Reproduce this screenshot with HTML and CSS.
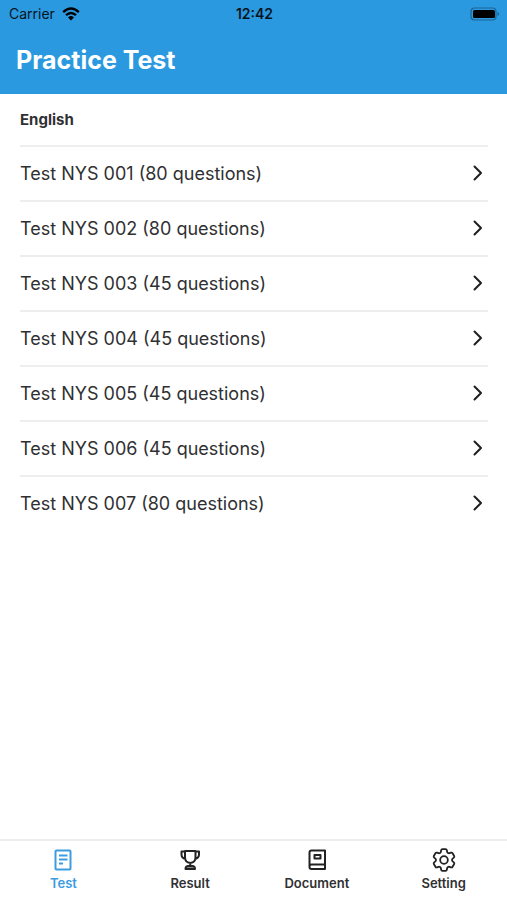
FILE: index.html
```html
<!DOCTYPE html>
<html lang="en">
<head>
<meta charset="utf-8">
<meta name="viewport" content="width=device-width, initial-scale=1">
<title>Practice Test</title>
<link rel="stylesheet" href="styles.css">
</head>
<body>
<header class="header">
  <div class="status">
    <div class="carrier">
      <span>Carrier</span>
      <svg class="wifi" viewBox="0 0 18 14" aria-hidden="true">
        <path d="M1.2 5.2Q9-2 16.8 5.2M4 8.2Q9 3.8 14 8.2" fill="none" stroke="currentColor" stroke-width="2.4"/>
        <path d="M6 10.4Q9 7.8 12 10.4L9 13.6Z" fill="currentColor"/>
      </svg>
    </div>
    <time class="clock">12:42</time>
    <svg class="battery" viewBox="0 0 30 14" aria-hidden="true">
      <rect x="1" y="1" width="25" height="12" rx="3.5" fill="none" stroke="#1c6593" stroke-width="1.2"/>
      <rect x="3" y="3" width="22" height="8" rx="1.6" fill="#000"/>
      <path d="M27.5 5v4q1.6-.6 1.6-2t-1.6-2Z" fill="#1c6593"/>
    </svg>
  </div>
  <h1 class="title">Practice Test</h1>
</header>
<main class="content">
  <h2 class="section">English</h2>
  <ul class="list">
    <li><a class="row" href="#1"><span>Test NYS 001 (80 questions)</span><svg class="chevron" viewBox="0 0 10 16" aria-hidden="true"><path d="M1.5 1.5 8 8l-6.500 6.500"/></svg></a></li>
    <li><a class="row" href="#2"><span>Test NYS 002 (80 questions)</span><svg class="chevron" viewBox="0 0 10 16" aria-hidden="true"><path d="M1.5 1.5 8 8l-6.500 6.500"/></svg></a></li>
    <li><a class="row" href="#3"><span>Test NYS 003 (45 questions)</span><svg class="chevron" viewBox="0 0 10 16" aria-hidden="true"><path d="M1.5 1.5 8 8l-6.500 6.500"/></svg></a></li>
    <li><a class="row" href="#4"><span>Test NYS 004 (45 questions)</span><svg class="chevron" viewBox="0 0 10 16" aria-hidden="true"><path d="M1.5 1.5 8 8l-6.500 6.500"/></svg></a></li>
    <li><a class="row" href="#5"><span>Test NYS 005 (45 questions)</span><svg class="chevron" viewBox="0 0 10 16" aria-hidden="true"><path d="M1.5 1.5 8 8l-6.500 6.500"/></svg></a></li>
    <li><a class="row" href="#6"><span>Test NYS 006 (45 questions)</span><svg class="chevron" viewBox="0 0 10 16" aria-hidden="true"><path d="M1.5 1.5 8 8l-6.500 6.500"/></svg></a></li>
    <li><a class="row" href="#7"><span>Test NYS 007 (80 questions)</span><svg class="chevron" viewBox="0 0 10 16" aria-hidden="true"><path d="M1.5 1.5 8 8l-6.500 6.500"/></svg></a></li>
  </ul>
</main>
<nav class="tabs">
  <a class="tab active" href="#test" aria-current="page">
    <svg class="icon" viewBox="0 0 24 24" aria-hidden="true"><rect x="4.500" y="2.500" width="15" height="19" rx="1"/><path d="M8 7.500h8.500M8 11.500h8.500M8 15.500h4"/></svg>
    <span>Test</span>
  </a>
  <a class="tab" href="#result">
    <svg class="icon" viewBox="0 0 24 24" aria-hidden="true"><path d="M7 3h10.500v6.500q0 5-5.250 5.500Q7 14.500 7 9.500ZM7 3.500H3.500v3q0 3.500 4 4.500M17.500 3.500H21v3q0 3.500-4 4.500M12.250 15v3"/><path d="M7.500 21q0-2.700 2.300-3h5q2.200.3 2.200 3Z" fill="#888"/></svg>
    <span>Result</span>
  </a>
  <a class="tab" href="#document">
    <svg class="icon" viewBox="0 0 24 24" aria-hidden="true"><path d="M6.500 2.500H20v18.500H6.500q-2 0-2-2V4.500q0-2 2-2ZM4.500 18.500q0-2 2-2H20M9.500 7h6v3.500h-6Z"/></svg>
    <span>Document</span>
  </a>
  <a class="tab" href="#setting">
    <svg class="icon gear" viewBox="2 2 20 20" aria-hidden="true"><path d="M9.594 3.940c.09-.542.56-.94 1.110-.94h2.593c.55 0 1.020.398 1.110.94l.213 1.281c.063.374.313.686.645.87.074.04.147.083.22.127.325.196.72.257 1.075.124l1.217-.456a1.125 1.125 0 0 1 1.370.49l1.296 2.247a1.125 1.125 0 0 1-.26 1.431l-1.003.827c-.293.241-.438.613-.43.992a7.723 7.723 0 0 1 0 .255c-.008.378.137.75.43.991l1.004.827c.424.35.534.955.26 1.430l-1.298 2.247a1.125 1.125 0 0 1-1.369.491l-1.217-.456c-.355-.133-.75-.072-1.076.124a6.470 6.470 0 0 1-.22.128c-.331.183-.581.495-.644.869l-.213 1.281c-.09.543-.56.94-1.110.94h-2.594c-.55 0-1.019-.398-1.110-.94l-.213-1.281c-.062-.374-.312-.686-.644-.87a6.520 6.520 0 0 1-.22-.127c-.325-.196-.72-.257-1.076-.124l-1.217.456a1.125 1.125 0 0 1-1.369-.49l-1.297-2.247a1.125 1.125 0 0 1 .26-1.431l1.004-.827c.292-.24.437-.613.43-.991a6.932 6.932 0 0 1 0-.255c.007-.38-.138-.751-.43-.992l-1.004-.827a1.125 1.125 0 0 1-.26-1.430l1.297-2.247a1.125 1.125 0 0 1 1.370-.491l1.216.456c.356.133.751.072 1.076-.124.072-.044.146-.086.22-.128.332-.183.582-.495.644-.869l.214-1.280Z"/><circle cx="12" cy="12" r="3.200"/></svg>
    <span>Setting</span>
  </a>
</nav>
</body>
</html>
```
FILE: styles.css
```css
* { box-sizing: border-box; }

body {
  display: flex;
  flex-direction: column;
  min-height: 100vh;
  margin: 0;
  background: #fff;
  color: #303032;
  font-family: Inter, "Liberation Sans", sans-serif;
}

a { color: inherit; text-decoration: none; }

.header { background: #2b99e0; }

.status {
  display: grid;
  grid-template-columns: 1fr auto 1fr;
  align-items: center;
  height: 27px;
  padding: 0 7px 0 9px;
  color: #06141d;
  font-size: 14px;
}

.carrier { display: flex; align-items: center; gap: 7px; }
.wifi { width: 18px; height: 14px; color: #000; }
.clock { font-weight: 600; }
.battery { width: 30px; height: 14px; justify-self: end; }

.title {
  margin: 0;
  padding: 17px 16px 18px;
  color: #fff;
  font-size: 25px;
  font-weight: 700;
  line-height: 32px;
}

.content { flex: 1; padding: 0 19px 0 20px; }

.section {
  margin: 0;
  padding: 16px 0 15px;
  font-size: 15px;
  font-weight: 700;
  line-height: 20px;
}

.list { margin: 0; padding: 0; list-style: none; }

.row {
  display: flex;
  align-items: center;
  justify-content: space-between;
  height: 55px;
  padding: 0 5px 1px 0;
  border-top: 2px solid #eee;
  font-size: 18px;
}

.chevron { width: 10px; height: 16px; }

.chevron path {
  fill: none;
  stroke: #1f1f1f;
  stroke-width: 2;
  stroke-linecap: round;
  stroke-linejoin: round;
}

.tabs {
  display: grid;
  grid-template-columns: repeat(4, 1fr);
  height: 61px;
  border-top: 2px solid #eee;
}

.tab {
  display: flex;
  flex-direction: column;
  align-items: center;
  gap: 3px;
  padding-top: 7px;
  font-size: 13px;
  font-weight: 600;
  line-height: 16px;
}

.icon {
  width: 24px;
  height: 24px;
  fill: none;
  stroke: #222;
  stroke-width: 2;
  stroke-linejoin: round;
}

.gear { stroke-width: 1.5; }
.active { color: #3d9ce0; }
.active .icon { stroke: #3d9ce0; }
```
